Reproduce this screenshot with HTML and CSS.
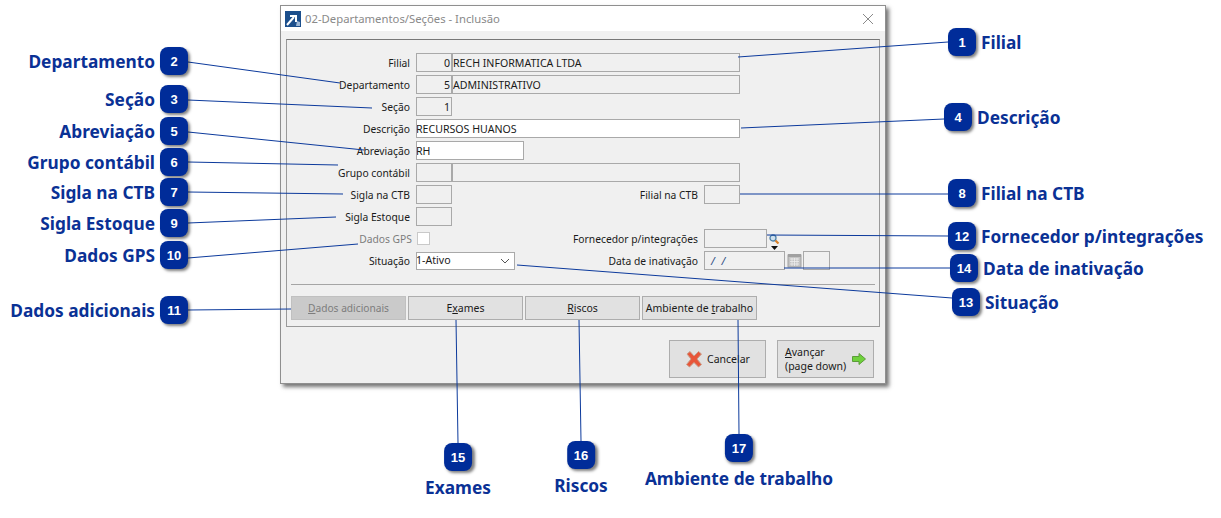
FILE: index.html
```html
<!DOCTYPE html>
<html lang="pt">
<head>
<meta charset="utf-8">
<title>02-Departamentos/Seções - Inclusão</title>
<link rel="stylesheet" href="styles.css">
</head>
<body>
<div class="canvas">
  <section class="window">
    <header class="titlebar">
      <svg class="app-icon" width="16" height="16" viewBox="0 0 16 16"><rect width="16" height="16" fill="#1c4f8c"/><path d="M2 14 L9 6 M5 5 H11 V11" stroke="#fff" stroke-width="2" fill="none"/><path d="M11 15 l1-5 3 1 v4z" fill="#9db7d6"/></svg>
      <span class="title">02-Departamentos/Seções - Inclusão</span>
      <svg class="close" width="12" height="12" viewBox="0 0 12 12"><path d="M1 1 L11 11 M11 1 L1 11" stroke="#8a8a8a" stroke-width="1" fill="none"/></svg>
    </header>
    <div class="panel">
      <div class="row"><span class="label">Filial</span><span class="field code num">0</span><span class="field name">RECH INFORMATICA LTDA</span></div>
      <div class="row"><span class="label">Departamento</span><span class="field code num">5</span><span class="field name">ADMINISTRATIVO</span></div>
      <div class="row"><span class="label">Seção</span><span class="field code num">1</span></div>
      <div class="row"><span class="label">Descrição</span><span class="field long white">RECURSOS HUANOS</span></div>
      <div class="row"><span class="label">Abreviação</span><span class="field short white">RH</span></div>
      <div class="row"><span class="label">Grupo contábil</span><span class="field code"></span><span class="field name"></span></div>
      <div class="row"><span class="label">Sigla na CTB</span><span class="field code"></span><span class="label second">Filial na CTB</span><span class="field code"></span></div>
      <div class="row"><span class="label">Sigla Estoque</span><span class="field code"></span></div>
      <div class="row">
        <span class="label muted">Dados GPS</span><span class="check"></span>
        <span class="label third">Fornecedor p/integrações</span><span class="field supplier"></span>
        <span class="lookup">
          <svg width="11" height="10" viewBox="0 0 11 10"><circle cx="4" cy="4" r="3" fill="#cfe0ee" stroke="#4a7fa5" stroke-width="1.3"/><path d="M6.500 6.500 L9.500 9.500" stroke="#d9822b" stroke-width="2.200"/></svg>
          <svg class="caret" width="7" height="4" viewBox="0 0 7 4"><path d="M0 0 H7 L3.500 4z" fill="#111"/></svg>
        </span>
      </div>
      <div class="row">
        <span class="label">Situação</span>
        <span class="field select white">1-Ativo<svg width="10" height="6" viewBox="0 0 10 6"><path d="M1 1 L5 5 L9 1" stroke="#555" fill="none"/></svg></span>
        <span class="label fourth">Data de inativação</span>
        <span class="field date"><i>/</i> <i>/</i></span>
        <svg class="calendar" width="15" height="15" viewBox="0 0 15 15"><rect x="1" y="2" width="13" height="12" fill="#c4c4c4" stroke="#a0a0a0"/><rect x="1" y="1" width="13" height="3" fill="#a0a0a0"/><path d="M3 6 H12 M3 8.500 H12 M3 11 H12 M5 5 V13 M7.500 5 V13 M10 5 V13" stroke="#eee" stroke-width=".8"/></svg>
        <span class="field time"></span>
      </div>
      <div class="rule"></div>
      <div class="tabs">
        <span class="btn off"><span><u>D</u>ados adicionais</span></span>
        <span class="btn"><span>E<u>x</u>ames</span></span>
        <span class="btn"><span><u>R</u>iscos</span></span>
        <span class="btn"><span>Ambiente de <u>t</u>rabalho</span></span>
      </div>
    </div>
    <footer class="actions">
      <span class="btn big">
        <svg width="18" height="18" viewBox="0 0 18 18"><path d="M2 4 L5 1.500 L9 6 L13.500 1.500 L16.500 4 L12 9 L16.500 14.500 L13.500 17 L9 12.500 L4.500 17 L1.500 14.500 L6 9z" fill="#e8563a" stroke="#c9a08c" stroke-width="1"/></svg>
        <span>Cancelar</span>
      </span>
      <span class="btn big next">
        <span><u>A</u>vançar<br>(page down)</span>
        <svg width="14" height="12" viewBox="0 0 14 12"><path d="M0.500 3.500 H7 V0.500 L13.500 6 L7 11.500 V8.500 H0.500z" fill="#6fd13c" stroke="#5c9c3a"/></svg>
      </span>
    </footer>
  </section>

  <svg class="leaders" width="1221" height="518" viewBox="0 0 1221 518">
    <path d="M948 42 L738 57 M188 62 L340 83 M188 100 L372 108 M944 119 L741 128 M188 132 L364 150 M188 162 L338 165 M188 192 L343 194 M948 194 L740 194 M188 223 L336 217 M188 258 L358 244 M188 310 L291 309 M948 236 L767 235 M952 298 L517 265 M950 268 L784 268 M458 443 L456 320 M581 441 L579 320 M739 434 L738 320"/>
  </svg>

  <div class="callout right c1"><b class="badge">1</b><span>Filial</span></div>
  <div class="callout left c2"><span>Departamento</span><b class="badge">2</b></div>
  <div class="callout left c3"><span>Seção</span><b class="badge">3</b></div>
  <div class="callout right c4"><b class="badge">4</b><span>Descrição</span></div>
  <div class="callout left c5"><span>Abreviação</span><b class="badge">5</b></div>
  <div class="callout left c6"><span>Grupo contábil</span><b class="badge">6</b></div>
  <div class="callout left c7"><span>Sigla na CTB</span><b class="badge">7</b></div>
  <div class="callout right c8"><b class="badge">8</b><span>Filial na CTB</span></div>
  <div class="callout left c9"><span>Sigla Estoque</span><b class="badge">9</b></div>
  <div class="callout left c10"><span>Dados GPS</span><b class="badge">10</b></div>
  <div class="callout left c11"><span>Dados adicionais</span><b class="badge">11</b></div>
  <div class="callout right c12"><b class="badge">12</b><span>Fornecedor p/integrações</span></div>
  <div class="callout right c13"><b class="badge">13</b><span>Situação</span></div>
  <div class="callout right c14"><b class="badge">14</b><span>Data de inativação</span></div>
  <div class="callout below c15"><b class="badge">15</b><span>Exames</span></div>
  <div class="callout below c16"><b class="badge">16</b><span>Riscos</span></div>
  <div class="callout below c17"><b class="badge">17</b><span>Ambiente de trabalho</span></div>
</div>
</body>
</html>
```
FILE: styles.css
```css
* { box-sizing: border-box; }
html, body { margin: 0; background: #fff; }
.canvas { position: relative; width: 1221px; height: 518px; overflow: hidden; font-family: "Noto Sans", "DejaVu Sans", sans-serif; }

.window { position: absolute; left: 280px; top: 5px; width: 606px; height: 379px; background: #f0f0f0; border: 1px solid #8f8f8f; box-shadow: 3px 3px 4px rgba(0,0,0,.55); display: flex; flex-direction: column; font-size: 10.3px; color: #1a1a1a; }
.titlebar { height: 25px; background: #fff; display: flex; align-items: center; padding: 0 11px 0 4px; flex: none; }
.app-icon { flex: none; }
.title { margin-left: 4px; font-size: 11.3px; color: #8a8a8a; flex: 1; }

.panel { margin: 8px 5px 0 5px; height: 288px; border: 1px solid #9a9a9a; border-top-color: #777; padding: 13px 4px 0 4px; flex: none; }
.row { display: flex; align-items: center; height: 19px; margin-bottom: 3px; }
.label { width: 119px; margin-right: 6px; text-align: right; white-space: nowrap; flex: none; }
.label.muted { color: #7d7d7d; margin-right: 5px; width: 121px; }
.label.second { width: 246px; }
.label.third { width: 268px; margin-left: 0; }
.label.fourth { width: 183px; margin-right: 6px; }
.field { height: 19px; border: 1px solid #a9a9a9; padding: 0; font-size: 10.6px; line-height: 19px; white-space: nowrap; flex: none; overflow: hidden; }
.code { width: 36px; margin-right: 0; }
.num { text-align: right; padding-right: 1px; }
.name { width: 288px; }
.long { width: 324px; text-indent: -1px; }
.short { width: 108px; text-indent: -1px; }
.white { background: #fff; }
.check { width: 13px; height: 13px; background: #fff; border: 1px solid #c9c9c9; flex: none; }
.supplier { width: 63px; }
.lookup { display: flex; flex-direction: column; align-items: center; width: 14px; height: 19px; padding-top: 3px; margin-top: 3px; }
.caret { margin-top: 2px; }
.select { width: 99px; height: 18px; display: flex; justify-content: space-between; align-items: center; padding-right: 4px; text-indent: -1px; }
.date { width: 81px; padding-left: 6px; color: #2a4a80; }
.date i { margin-right: 4px; }
.calendar { margin: 0 1px 0 2px; flex: none; }
.time { width: 27px; }

.rule { height: 1px; background: #a5a5a5; margin: 14px 0 11px; }
.tabs { display: flex; gap: 2px; }
.btn { display: flex; align-items: center; justify-content: center; background: #e1e1e1; border: 1px solid #adadad; height: 24px; width: 115px; white-space: nowrap; flex: none; font-size: 10.5px; }
.btn.off { background: #cacaca; border-color: #c0c0c0; color: #7d7d7d; font-size: 10.2px; }
.actions { display: flex; justify-content: flex-end; gap: 11px; padding: 13px 11px 0 0; }
.btn.big { width: 97px; height: 38px; gap: 4px; }
.btn.next { justify-content: flex-start; padding-left: 7px; gap: 6px; line-height: 14px; }

.leaders { position: absolute; left: 0; top: 0; pointer-events: none; }
.leaders path { stroke: #0c3a9c; stroke-width: 1; fill: none; }

.callout { position: absolute; display: flex; align-items: center; gap: 5px; color: #0a3195; font-weight: 700; font-size: 17.3px; white-space: nowrap; }
.callout.left { right: 1033px; }
.callout.below { flex-direction: column; gap: 5px; transform: translateX(-50%); }
.badge { width: 28px; height: 28px; flex: none; border-radius: 8px; background: #002c99; color: #fff; font-family: "Liberation Sans", sans-serif; font-size: 13px; display: flex; align-items: center; justify-content: center; box-shadow: 2px 2px 3px rgba(0,0,0,.5); }
.c1 { left: 948px; top: 28px; }
.c2 { top: 47px; }
.c3 { top: 85px; }
.c4 { left: 944px; top: 103px; }
.c5 { top: 117px; }
.c6 { top: 148px; }
.c7 { top: 178px; }
.c8 { left: 948px; top: 179px; }
.c9 { top: 209px; }
.c10 { top: 241px; }
.c11 { top: 296px; }
.c12 { left: 948px; top: 222px; }
.c13 { left: 952px; top: 288px; }
.c14 { left: 950px; top: 254px; }
.c15 { left: 458px; top: 443px; }
.c16 { left: 581px; top: 441px; }
.c17 { left: 739px; top: 434px; }
```
